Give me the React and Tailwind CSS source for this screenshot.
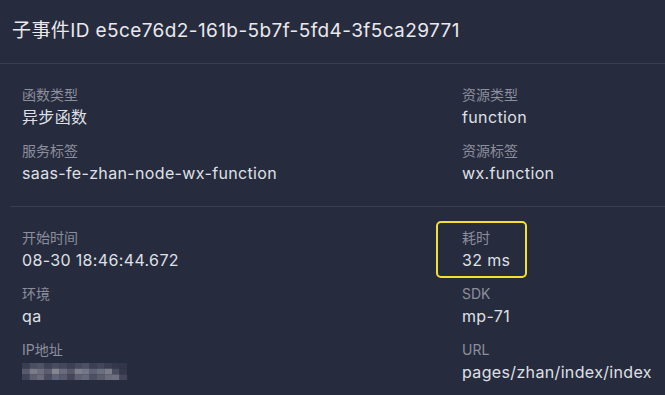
import React from 'react';

const SECTIONS = [
  [
    { label: '函数类型', value: '异步函数' },
    { label: '资源类型', value: 'function' },
    { label: '服务标签', value: 'saas-fe-zhan-node-wx-function' },
    { label: '资源标签', value: 'wx.function' },
  ],
  [
    { label: '开始时间', value: '08-30 18:46:44.672' },
    { label: '耗时', value: '32 ms', highlight: true },
    { label: '环境', value: 'qa' },
    { label: 'SDK', value: 'mp-71' },
    { label: 'IP地址', blurred: true },
    { label: 'URL', value: 'pages/zhan/index/index' },
  ],
];

// pixelated (mosaic) ip address
const MOSAIC = [
  ['#3a3d50', '#4b4e60', '#505366', '#3f4256', '#4a4d60', '#45485b', '#3d4054', '#474a5d', '#4e5164', '#3c3f53', '#43465a', '#3a3d50', '#34374a', '#33364a'],
  ['#575a6c', '#7a7c8a', '#6d6f7e', '#5b5e70', '#85878f', '#6a6c7c', '#565969', '#7d7f8c', '#74768a', '#5f6274', '#6b6e7e', '#7a7c88', '#4a4d5f', '#34374a'],
  ['#40435a', '#5e6072', '#6a6c7b', '#4a4d60', '#61637a', '#585b6c', '#44475a', '#5f6172', '#65677a', '#4d5063', '#5a5d6e', '#6a6c7b', '#6e7080', '#43465a'],
];

function Mosaic() {
  return (
    <svg width="110" height="17" viewBox="0 0 110 17" className="block">
      {MOSAIC.map((row, r) =>
        row.map((c, i) => <rect key={`${r}-${i}`} x={i * 7.5} y={r * 5.7} width="7.6" height="5.8" fill={c} />)
      )}
    </svg>
  );
}

function Field({ item }) {
  return (
    <div className="relative">
      {item.highlight && (
        <div className="absolute -left-[26px] -top-[6px] w-[91px] h-[57px] border-2 border-[#f4e12c] rounded-[5px]" />
      )}
      <div className="text-[14px] leading-[21px] text-[#8b8e9c]">{item.label}</div>
      <div className="text-[16px] leading-[24px] tracking-[0.35px] text-[#dfe0e5] whitespace-nowrap">
        {item.blurred ? <div className="pt-[3px]"><Mosaic /></div> : item.value}
      </div>
    </div>
  );
}

export default function App() {
  return (
    <div
      className="w-[665px] h-[395px] overflow-hidden bg-[#272b3e]"
      style={{ fontFamily: 'Inter, "Noto Sans CJK SC", sans-serif' }}
    >
      {/* Header */}
      <div className="h-[64px] flex items-center px-[12px] border-b border-[#3a3e51]">
        <h2 className="text-[19px] tracking-[0.4px] text-[#e9e9ec] whitespace-nowrap">子事件ID e5ce76d2-161b-5b7f-5fd4-3f5ca29771</h2>
      </div>

      <div className="pl-[10px]">
        {SECTIONS.map((items, s) => (
          <div key={s} className={`pl-[12px] pt-[20px] pb-[21px] ${s === 0 ? 'border-b border-[#3a3e51]' : ''}`}>
            <div className="grid grid-cols-[440px_1fr] gap-y-[11px]">
              {items.map((it) => (
                <Field key={it.label} item={it} />
              ))}
            </div>
          </div>
        ))}
      </div>
    </div>
  );
}
